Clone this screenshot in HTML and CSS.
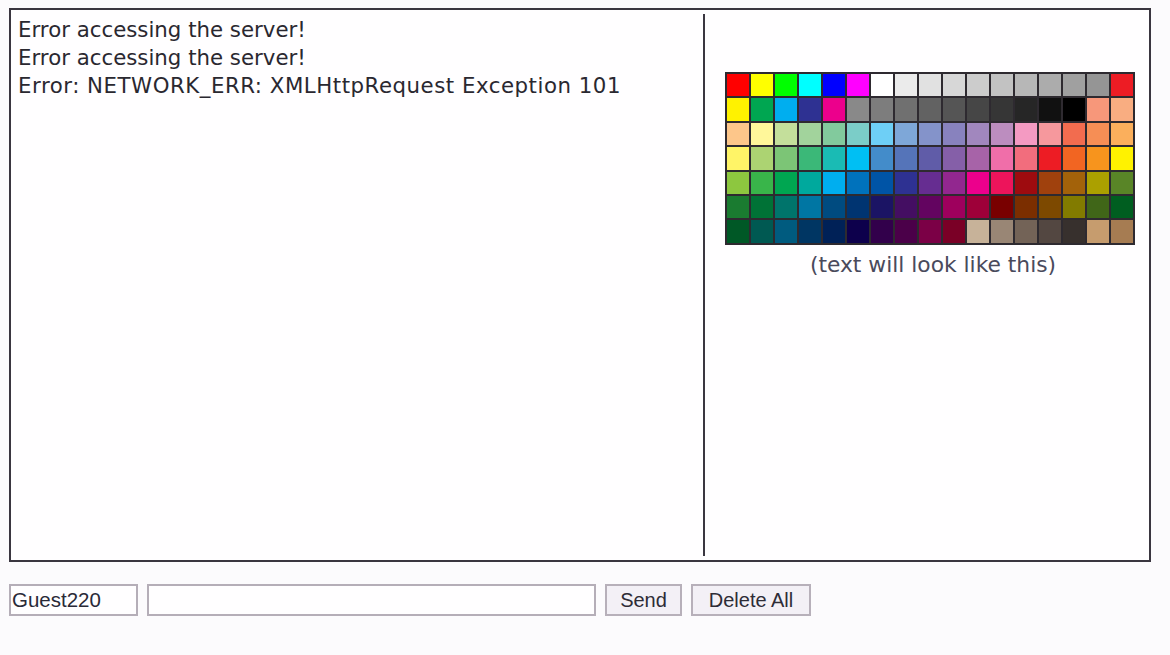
FILE: index.html
```html
<!DOCTYPE html>
<html>
<head>
<meta charset="utf-8">
<link rel="stylesheet" href="styles.css">
</head>
<body>
<div class="chat">
  <div class="messages">
    <div class="line">Error accessing the server!</div>
    <div class="line">Error accessing the server!</div>
    <div class="line wide">Error: NETWORK_ERR: XMLHttpRequest Exception 101</div>
  </div>
  <div class="side">
    <div class="palette" id="palette"></div>
    <div class="sample">(text will look like this)</div>
  </div>
</div>
<div class="controls">
  <input class="user" type="text" value="Guest220">
  <input class="msg" type="text" value="">
  <button class="btn send">Send</button>
  <button class="btn del">Delete All</button>
</div>
<script src="script.js"></script>
</body>
</html>
```

FILE: styles.css
```css
html, body {
  margin: 0;
  padding: 0;
  background: #fcfbfd;
}
body {
  padding: 8px 0 0 9px;
}
.chat {
  width: 1142px;
  height: 554px;
  box-sizing: border-box;
  border: 2px solid #3a3640;
  background: #fffeff;
  display: flex;
  padding: 4px 0;
}
.messages {
  width: 694px;
  box-sizing: border-box;
  border-right: 2px solid #3a3640;
  padding: 2px 0 0 7px;
  font-family: "DejaVu Sans", Verdana, sans-serif;
  font-size: 21.3px;
  line-height: 28px;
  color: #2a2830;
}
.line {
  white-space: nowrap;
}
.wide {
  letter-spacing: 0.52px;
}
.side {
  flex: 1;
  display: flex;
  flex-direction: column;
  align-items: flex-start;
  padding: 58px 0 0 20px;
}
.palette {
  display: grid;
  grid-template-columns: repeat(17, 22px);
  grid-template-rows: repeat(7, 22.4px);
  gap: 2px;
  padding: 2px;
  background: #2e2a30;
}
.cell {
  display: block;
}
.sample {
  width: 416px;
  text-align: center;
  margin-top: 6px;
  font-family: "DejaVu Sans", Verdana, sans-serif;
  font-size: 21.8px;
  line-height: 28px;
  color: #4a4a5c;
}
.controls {
  display: flex;
  gap: 9px;
  margin-top: 22px;
  align-items: center;
}
.user, .msg {
  height: 32px;
  box-sizing: border-box;
  border: 2px solid #b5aeb8;
  background: #fffeff;
  font-family: "Liberation Sans", Arial, sans-serif;
  font-size: 20.5px;
  color: #2a2a38;
  padding: 0 0 0 1px;
  margin: 0;
  outline: none;
}
.user { width: 129px; }
.msg { width: 449px; }
.btn {
  height: 32px;
  box-sizing: border-box;
  border: 2px solid #b7b0ba;
  background: #f3f0f6;
  font-family: "Liberation Sans", Arial, sans-serif;
  font-size: 20px;
  color: #2e2c36;
  margin: 0;
  padding: 0;
}
.send { width: 77px; }
.del { width: 120px; }
```

FILE: script.js
```js
var colors = [
"#FF0000","#FFFF00","#00FF00","#00FFFF","#0000FF","#FF00FF","#FFFFFF","#EBEBEB","#E1E1E1","#D7D7D7","#CCCCCC","#C2C2C2","#B7B7B7","#ACACAC","#A0A0A0","#959595","#ED1C24",
"#FFF200","#00A651","#00AEEF","#2E3192","#EC008C","#898989","#7D7D7D","#707070","#626262","#555555","#464646","#363636","#262626","#111111","#000000","#F7977A","#F9AD81",
"#FDC68A","#FFF79A","#C4DF9B","#A2D39C","#82CA9D","#7BCDC8","#6ECFF6","#7EA7D8","#8493CA","#8882BE","#A187BE","#BC8DBF","#F49AC2","#F6989D","#F26C4F","#F68E55","#FBAF5C",
"#FFF467","#ACD372","#7CC576","#3BB878","#1ABBB4","#00BFF3","#438CCA","#5574B9","#605CA8","#855FA8","#A763A8","#F06EA9","#F26D7D","#ED1C24","#F26522","#F7941D","#FFF200",
"#8DC73F","#39B54A","#00A651","#00A99D","#00AEEF","#0072BC","#0054A6","#2E3192","#662D91","#92278F","#EC008C","#ED145B","#9E0B0F","#A0410D","#A3620A","#ABA000","#598527",
"#1A7B30","#007236","#00746B","#0076A3","#004B80","#003471","#1B1464","#440E62","#630460","#9E005D","#9E0039","#790000","#7B2E00","#7D4900","#827B00","#406618","#005E20",
"#005826","#005952","#005B7F","#003663","#002157","#0D004C","#32004B","#4B0049","#7B0046","#7A0026","#C7B299","#998675","#736357","#534741","#37302D","#C69C6E","#A67C52"
];
var p = document.getElementById("palette");
colors.forEach(function (c) {
  var d = document.createElement("span");
  d.className = "cell";
  d.style.background = c;
  p.appendChild(d);
});
```
